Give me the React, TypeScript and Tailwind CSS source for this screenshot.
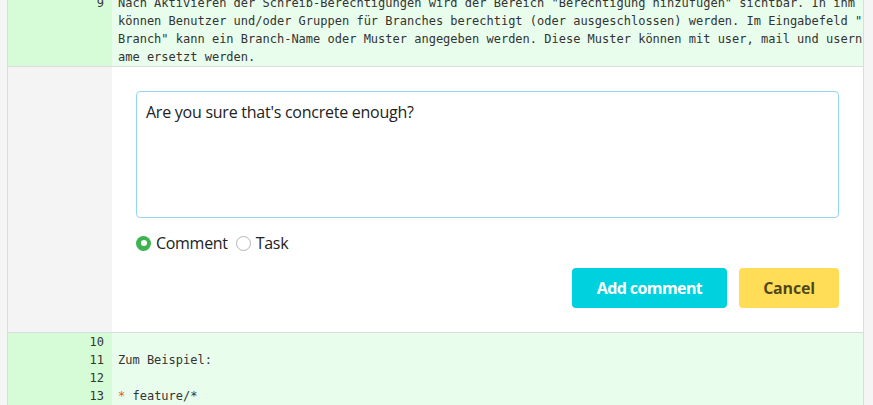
const mono = { fontFamily: '"DejaVu Sans Mono", monospace' };

const CodeRow = ({ num, children }: { num: number; children?: React.ReactNode }) => (
  <div className="flex text-[12px] leading-[18px] text-[#333]" style={mono}>
    <div className="w-[104px] shrink-0 bg-[#d6fcd7] pr-[8px] text-right">{num}</div>
    <div className="w-[751px] shrink-0 bg-[#e9fdec] pl-[6px] whitespace-pre-wrap [line-break:anywhere]">{children}</div>
  </div>
);

export default function App() {
  return (
    <div className="flex h-[405px] w-[873px] overflow-hidden bg-white">
      <div className="w-[8px] shrink-0 border-r border-[#dcdcdc] bg-[#f5f5f5]" />
      <div className="flex w-[855px] shrink-0 flex-col">
        <div className="-mt-[6px] border-b border-[#dcdcdc]">
          <CodeRow num={9}>
            Nach Aktivieren der Schreib-Berechtigungen wird der Bereich "Berechtigung hinzufügen" sichtbar. In ihm können Benutzer und/oder Gruppen für Branches berechtigt (oder ausgeschlossen) werden. Im Eingabefeld "Branch" kann ein Branch-Name oder Muster angegeben werden. Diese Muster können mit user, mail und username ersetzt werden.
          </CodeRow>
        </div>
        <div className="flex border-b border-[#dcdcdc]" style={{ fontFamily: '"Open Sans", sans-serif' }}>
          <div className="w-[104px] shrink-0 bg-[#f4f4f4]" />
          <div className="flex-1 p-6">
            <div className="h-[127px] rounded-[4px] border border-[#93d6ef] bg-white px-[9px] py-[8px] text-[16px] leading-[24px] tracking-[-0.25px] text-[#222]">
              Are you sure that's concrete enough?
            </div>
            <div className="mt-[15px] flex items-center text-[16px] leading-[20px] tracking-[-0.3px] text-[#222]">
              <span className="mr-[5px] flex h-[15px] w-[15px] items-center justify-center rounded-full bg-[#3fb34f]">
                <span className="h-[6px] w-[6px] rounded-full bg-white" />
              </span>
              <span>Comment</span>
              <span className="ml-[8px] mr-[5px] h-[15px] w-[15px] rounded-full border border-[#b5b5b5] bg-white" />
              <span>Task</span>
            </div>
            <div className="mt-[15px] flex justify-end gap-[12px]">
              <button className="h-[40px] w-[155px] rounded-[4px] bg-[#00d1df] text-[16px] font-bold tracking-[-0.6px] text-white">
                Add comment
              </button>
              <button className="h-[40px] w-[100px] rounded-[4px] bg-[#ffdd57] text-[16px] font-bold tracking-[-0.2px] text-[rgba(0,0,0,0.7)]">
                Cancel
              </button>
            </div>
          </div>
        </div>
        <CodeRow num={10}> </CodeRow>
        <CodeRow num={11}>Zum Beispiel:</CodeRow>
        <CodeRow num={12}> </CodeRow>
        <CodeRow num={13}>
          <span className="text-[#e36209]">*</span> feature/*
        </CodeRow>
      </div>
      <div className="flex-1 border-l border-[#dcdcdc] bg-[#f5f5f5]" />
    </div>
  );
}
